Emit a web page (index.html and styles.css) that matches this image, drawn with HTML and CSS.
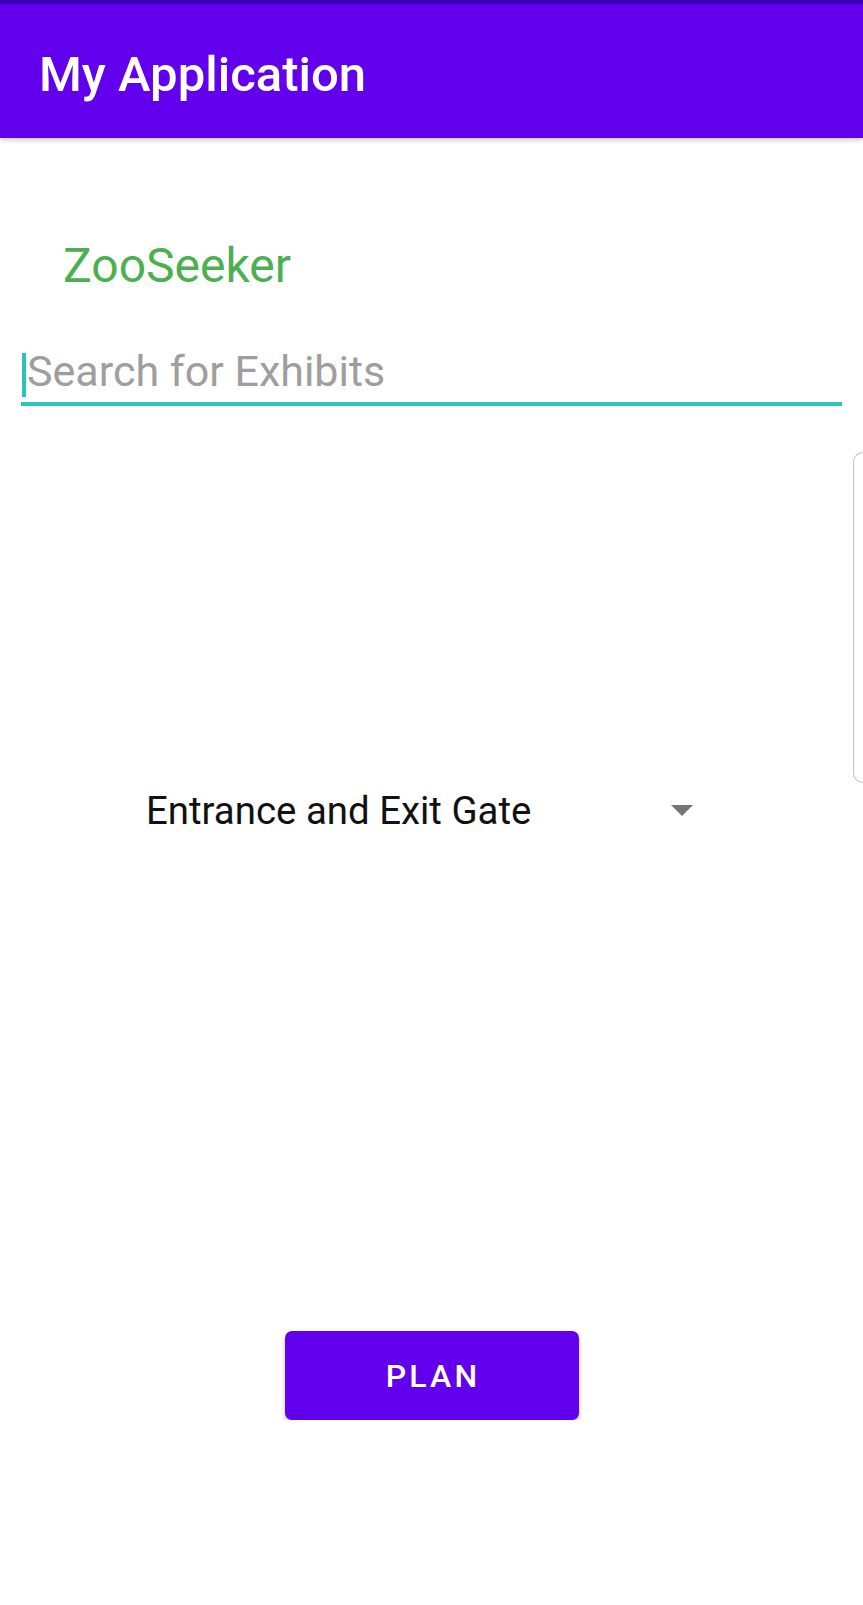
FILE: index.html
```html
<!DOCTYPE html>
<html lang="en">
<head>
<meta charset="utf-8">
<title>My Application</title>
<link rel="stylesheet" href="styles.css">
</head>
<body>
<header class="app-bar">
  <h1 class="app-title">My Application</h1>
</header>
<main class="content">
  <div class="brand">ZooSeeker</div>
  <div class="search">
    <span class="caret"></span>
    <span class="placeholder">Search for Exhibits</span>
  </div>
  <div class="list-row">
    <div class="list-box"></div>
  </div>
  <div class="spinner">
    <span class="spinner-text">Entrance and Exit Gate</span>
    <svg class="spinner-arrow" width="22" height="11" viewBox="0 0 22 11"><polygon points="0,0 22,0 11,11" fill="#757575"/></svg>
  </div>
  <div class="button-row">
    <button class="plan-btn">PLAN</button>
  </div>
</main>
</body>
</html>
```
FILE: styles.css
```css
html, body {
  margin: 0;
  padding: 0;
  background: #ffffff;
  font-family: Roboto, "Noto Sans", sans-serif;
  overflow-x: hidden;
}

.app-bar {
  background: #6200ee;
  border-top: 4px solid #3a00b8;
  height: 138px;
  box-sizing: border-box;
  padding: 46px 0 0 39px;
  box-shadow: 0 2px 5px rgba(0, 0, 0, 0.22);
  position: relative;
}

.app-title {
  margin: 0;
  color: #ffffff;
  font-size: 49px;
  line-height: 49px;
  font-weight: 500;
}

.content {
  display: flex;
  flex-direction: column;
}

.brand {
  margin: 104px 0 0 63px;
  font-size: 48px;
  line-height: 48px;
  color: #4caf50;
}

.search {
  display: flex;
  align-items: flex-start;
  margin: 56px 0 0 21px;
  width: 821px;
  height: 60px;
  box-sizing: border-box;
  border-bottom: 4px solid #2bc4b8;
}

.caret {
  width: 4px;
  height: 44px;
  margin: 7px 0 0 1px;
  background: #2bc4b8;
}

.placeholder {
  margin-left: 1px;
  font-size: 43px;
  line-height: 51px;
  color: #9e9e9e;
}

.list-row {
  display: flex;
  justify-content: flex-end;
  margin-top: 46px;
}

.list-box {
  width: 10px;
  height: 331px;
  box-sizing: border-box;
  border: 1.5px solid #c4c4c4;
  border-right: none;
  border-radius: 11px 0 0 11px;
}

.spinner {
  display: flex;
  align-items: center;
  justify-content: space-between;
  margin: 3px 0 0 146px;
  width: 547px;
  height: 48px;
}

.spinner-text {
  font-size: 38.4px;
  line-height: 49px;
  color: #111111;
}

.spinner-arrow {
  display: block;
}

.button-row {
  display: flex;
  justify-content: center;
  margin-top: 497px;
}

.plan-btn {
  width: 294px;
  height: 89px;
  border: none;
  border-radius: 7px;
  background: #6200ee;
  color: #ffffff;
  font-family: Roboto, "Noto Sans", sans-serif;
  font-size: 32px;
  font-weight: 500;
  letter-spacing: 0.1em;
  padding: 0 0 0 0.1em;
  box-shadow: 0 3px 5px rgba(0, 0, 0, 0.25);
}
```
